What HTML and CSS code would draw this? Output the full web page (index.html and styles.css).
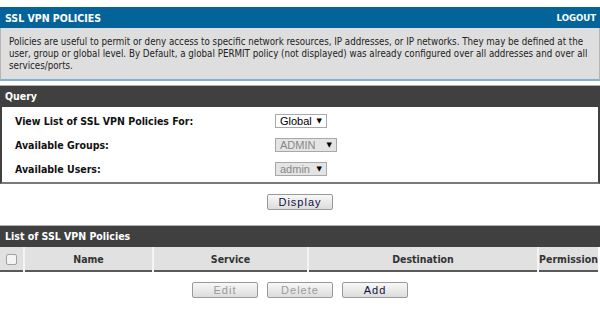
FILE: index.html
```html
<!DOCTYPE html>
<html>
  <head>
    <meta charset="UTF-8">
    <title>SSL VPN Policies</title>
    <link rel="stylesheet" href="styles.css">
  </head>
  <body>
    <div class="page-title">
      <span>SSL VPN POLICIES</span>
      <a class="logout">LOGOUT</a>
    </div>
    <div class="page-info">
      Policies are useful to permit or deny access to specific network resources, IP addresses, or IP networks. They may be defined at the user, group or global level. By Default, a global PERMIT policy (not displayed) was already configured over all addresses and over all services/ports.
    </div>

    <div class="section-title">Query</div>
    <div class="section-body">
      <div class="form-row">
        <label>View List of SSL VPN Policies For:</label>
        <div class="select">Global <span class="arrow">&#9660;</span></div>
      </div>
      <div class="form-row">
        <label>Available Groups:</label>
        <div class="select disabled wide">ADMIN <span class="arrow">&#9660;</span></div>
      </div>
      <div class="form-row">
        <label>Available Users:</label>
        <div class="select disabled">admin <span class="arrow">&#9660;</span></div>
      </div>
    </div>
    <div class="button-group">
      <button type="button">Display</button>
    </div>

    <div class="section-title list-title">List of SSL VPN Policies</div>
    <table class="policy-table">
      <tr>
        <th class="col-check"><span class="checkbox"></span></th>
        <th class="col-name">Name</th>
        <th class="col-service">Service</th>
        <th class="col-dest">Destination</th>
        <th class="col-perm">Permission</th>
      </tr>
    </table>
    <div class="button-group">
      <button type="button" disabled>Edit</button>
      <button type="button" disabled>Delete</button>
      <button type="button">Add</button>
    </div>
  </body>
</html>
```

FILE: styles.css
```css
* {
  box-sizing: border-box;
}
body {
  margin: 7px 0 0 0;
  width: 600px;
  font-family: "DejaVu Sans", sans-serif;
  font-stretch: condensed;
  font-size: 10px;
  color: #222;
}
.page-title {
  display: flex;
  justify-content: space-between;
  align-items: center;
  height: 21px;
  padding: 0 4px 0 5px;
  background-color: #04649a;
  color: white;
  font-weight: bold;
  font-size: 10.5px;
}
.logout {
  font-size: 9.5px;
}
.page-info {
  height: 53px;
  padding: 8px 6px 0 8px;
  background-color: #dedede;
  border: 1px solid #b5b5b5;
  border-top: none;
  border-bottom: 2px solid #7fb0cf;
  line-height: 12px;
  font-size: 9.7px;
}
.section-title {
  margin-top: 4px;
  height: 22px;
  line-height: 21px;
  padding-left: 5px;
  background-color: #404040;
  border-top: 1px solid #b0b0b0;
  color: white;
  font-weight: bold;
  font-size: 10.5px;
}
.section-body {
  border-left: 2px solid #404040;
  border-right: 2px solid #404040;
  border-bottom: 2px solid #7a7a7a;
  padding: 2px 0 1px 13px;
}
.form-row {
  display: flex;
  align-items: center;
  height: 24px;
}
.form-row label {
  width: 260px;
  font-weight: bold;
  font-size: 10.5px;
  color: #111;
}
.select {
  display: flex;
  justify-content: space-between;
  align-items: center;
  width: 52px;
  height: 14px;
  padding: 0 4px 0 4px;
  border: 1px solid #a8a8a8;
  background-color: white;
  font-family: "Liberation Sans", sans-serif;
  font-stretch: normal;
  font-size: 11px;
  color: #000;
}
.select.disabled {
  background-color: #e4e4e4;
  color: #888;
}
.select.wide {
  width: 62px;
}
.arrow {
  font-family: "DejaVu Sans", sans-serif;
  font-size: 7px;
  color: #000;
}
.button-group {
  display: flex;
  justify-content: center;
  gap: 9px;
  margin-top: 10px;
}
button {
  width: 66px;
  height: 16px;
  padding: 0;
  border: 1px solid #9a9a9a;
  border-radius: 2px;
  background: linear-gradient(#f8f8f8, #dcdcdc);
  font-family: "Liberation Sans", sans-serif;
  font-size: 11px;
  letter-spacing: 1px;
  color: #101040;
}
button:disabled {
  color: #9a9a9a;
}
.list-title {
  margin-top: 15px;
}
.policy-table {
  width: 598px;
  border-collapse: collapse;
  border-bottom: 2px solid #5a5a5a;
}
.policy-table th {
  height: 24px;
  padding: 0;
  background-color: #e1e1e1;
  border-left: 2px solid #f4f4f4;
  font-size: 10.5px;
  color: #333;
}
.policy-table th.col-check {
  border-left: none;
  width: 24px;
}
.col-name {
  width: 129px;
}
.col-service {
  width: 155px;
}
.col-dest {
  width: 230px;
}
.checkbox {
  display: inline-block;
  width: 11px;
  height: 11px;
  border: 1px solid #a0a0a0;
  border-radius: 2px;
  background: #f4f4f4;
  vertical-align: middle;
}
```
